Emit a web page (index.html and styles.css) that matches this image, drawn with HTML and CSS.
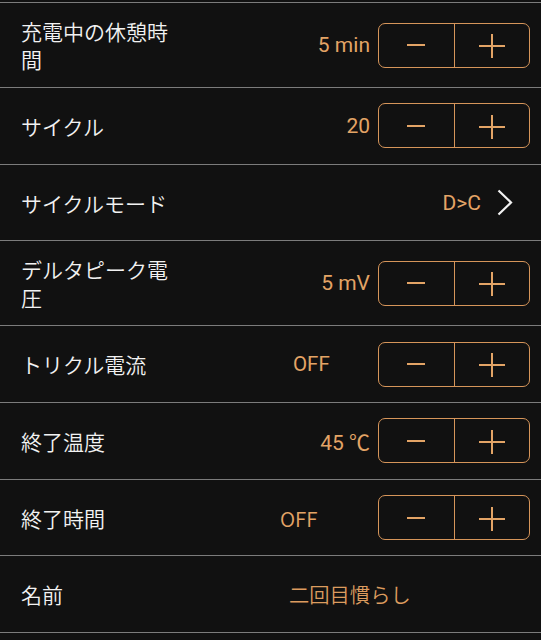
FILE: index.html
```html
<!DOCTYPE html>
<html lang="ja">
<head>
<meta charset="utf-8">
<link rel="stylesheet" href="styles.css">
</head>
<body>
<div class="list">
  <div class="row">
    <div class="label">充電中の休憩時間</div>
    <div class="value">5 min</div>
    <div class="stepper"><button class="btn minus"><span class="mi"></span></button><button class="btn plus"><span class="pl"></span></button></div>
  </div>
  <div class="row">
    <div class="label">サイクル</div>
    <div class="value">20</div>
    <div class="stepper"><button class="btn minus"><span class="mi"></span></button><button class="btn plus"><span class="pl"></span></button></div>
  </div>
  <div class="row nav">
    <div class="label">サイクルモード</div>
    <div class="value">D&gt;C</div>
    <svg class="chev" width="16" height="27" viewBox="0 0 16 27"><polyline points="1.5,1.5 14,13.5 1.5,25.5" fill="none" stroke="#f2f2f2" stroke-width="2.2"/></svg>
  </div>
  <div class="row">
    <div class="label">デルタピーク電圧</div>
    <div class="value">5 mV</div>
    <div class="stepper"><button class="btn minus"><span class="mi"></span></button><button class="btn plus"><span class="pl"></span></button></div>
  </div>
  <div class="row">
    <div class="label">トリクル電流</div>
    <div class="value off1">OFF</div>
    <div class="stepper"><button class="btn minus"><span class="mi"></span></button><button class="btn plus"><span class="pl"></span></button></div>
  </div>
  <div class="row">
    <div class="label">終了温度</div>
    <div class="value">45 ℃</div>
    <div class="stepper"><button class="btn minus"><span class="mi"></span></button><button class="btn plus"><span class="pl"></span></button></div>
  </div>
  <div class="row">
    <div class="label">終了時間</div>
    <div class="value off2">OFF</div>
    <div class="stepper"><button class="btn minus"><span class="mi"></span></button><button class="btn plus"><span class="pl"></span></button></div>
  </div>
  <div class="row">
    <div class="label">名前</div>
    <div class="value name">二回目慣らし</div>
  </div>
</div>
</body>
</html>
```
FILE: styles.css
```css
html, body {
  margin: 0;
  padding: 0;
  background: #111111;
}
body {
  width: 541px;
  height: 640px;
  overflow: hidden;
  font-family: "Noto Sans CJK JP", "Noto Sans", sans-serif;
}
.list {
  padding-top: 2px;
}
.row {
  display: flex;
  align-items: center;
  min-height: 75.7px;
  border-top: 1px solid #7c7c7c;
  padding: 0 11px 0 21px;
  box-sizing: content-box;
}
.row:last-child {
  border-bottom: 1px solid #7c7c7c;
}
.label {
  flex: none;
  width: 155px;
  color: #f2f2f2;
  font-size: 21px;
  font-weight: 350;
  line-height: 28px;
  padding: 14px 0;
}
.value {
  flex: 1;
  text-align: right;
  color: #e3a466;
  font-family: Roboto, "Noto Sans CJK JP", sans-serif;
  font-size: 21px;
  font-weight: 400;
  padding-right: 8px;
}
.value.off1 {
  text-align: left;
  padding-left: 117px;
  font-size: 20.5px;
}
.value.off2 {
  text-align: left;
  padding-left: 104px;
  font-family: "Noto Sans CJK JP", sans-serif;
  font-weight: 350;
  font-size: 20.5px;
}
.value.name {
  text-align: left;
  padding-left: 113px;
  font-family: "Noto Sans CJK JP", sans-serif;
  font-size: 20.3px;
  font-weight: 350;
  color: #dc9c5f;
}
.nav .value {
  padding-right: 16px;
}
.chev {
  flex: none;
  margin-right: 17px;
}
.stepper {
  flex: none;
  display: flex;
  width: 152px;
  height: 45px;
  border: 1.5px solid #d6955a;
  border-radius: 7px;
  box-sizing: border-box;
  overflow: hidden;
}
.btn {
  flex: 1;
  display: flex;
  align-items: center;
  justify-content: center;
  background: transparent;
  border: 0;
  padding: 0;
  margin: 0;
}
.btn.minus {
  border-right: 1.5px solid #d6955a;
}
.mi {
  display: block;
  width: 18px;
  height: 2px;
  background: #e3a466;
}
.pl {
  display: block;
  position: relative;
  width: 26px;
  height: 24px;
  margin-top: 2px;
}
.pl::before,
.pl::after {
  content: "";
  position: absolute;
  background: #e3a466;
}
.pl::before {
  left: 0;
  right: 0;
  top: 11px;
  height: 2px;
}
.pl::after {
  top: 0;
  bottom: 0;
  left: 12px;
  width: 2px;
}
```
